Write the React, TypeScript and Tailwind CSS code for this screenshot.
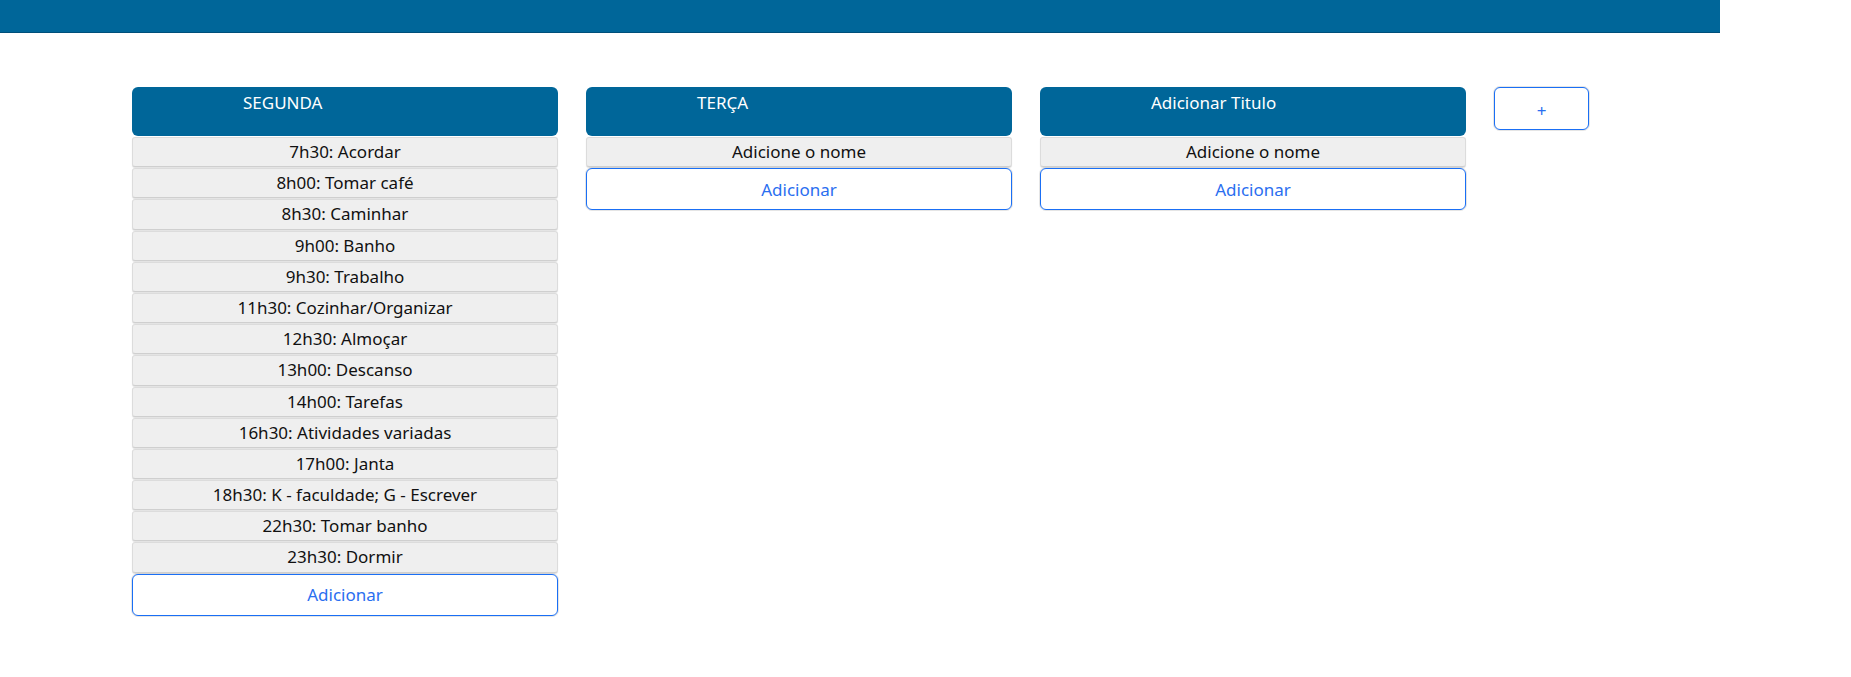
import React from "react";

const segunda = [
  "7h30: Acordar",
  "8h00: Tomar café",
  "8h30: Caminhar",
  "9h00: Banho",
  "9h30: Trabalho",
  "11h30: Cozinhar/Organizar",
  "12h30: Almoçar",
  "13h00: Descanso",
  "14h00: Tarefas",
  "16h30: Atividades variadas",
  "17h00: Janta",
  "18h30: K - faculdade; G - Escrever",
  "22h30: Tomar banho",
  "23h30: Dormir",
];

function Column({ title, items }: { title: string; items: string[] }) {
  return (
    <div className="flex w-[426px] flex-col">
      <div className="h-[49px] rounded-[6px] bg-[#006699] pl-[111px] pt-[3px] text-[17px] leading-[25px] text-white">
        {title}
      </div>
      <div className="flex flex-col">
        {items.map((it, i) => (
          <div
            key={i}
            className="mt-[1px] h-[30.2px] rounded-[3px] border border-[#dcdcdc] border-b-[#cfcfcf] bg-[#efefef] text-center text-[17px] leading-[28px] text-[#111] shadow-[0_1px_1px_rgba(0,0,0,0.12)]"
          >
            {it}
          </div>
        ))}
      </div>
      <button className="mt-[1px] h-[42px] rounded-[6px] border border-[#1a6ff5] bg-white pt-[1px] text-center text-[17px] text-[#2a6ef0] shadow-[0_0_0_1px_rgba(180,180,180,0.35)]">
        Adicionar
      </button>
    </div>
  );
}

export default function App() {
  return (
    <div
      className="min-h-[677px] w-full bg-white"
      style={{ fontFamily: '"Noto Sans", "Open Sans", sans-serif' }}
    >
      <div className="h-[33px] w-[1720px] border-b border-[#004f7a] bg-[#006699]" />
      <div className="flex items-start gap-[28px] pl-[132px] pt-[54px]">
        <Column title="SEGUNDA" items={segunda} />
        <Column title="TERÇA" items={["Adicione o nome"]} />
        <Column title="Adicionar Titulo" items={["Adicione o nome"]} />
        <button className="h-[43px] w-[95px] rounded-[6px] border border-[#1a6ff5] bg-white pt-[4px] text-[17px] text-[#2a6ef0] shadow-[0_0_0_1px_rgba(180,180,180,0.35)]">
          +
        </button>
      </div>
    </div>
  );
}
